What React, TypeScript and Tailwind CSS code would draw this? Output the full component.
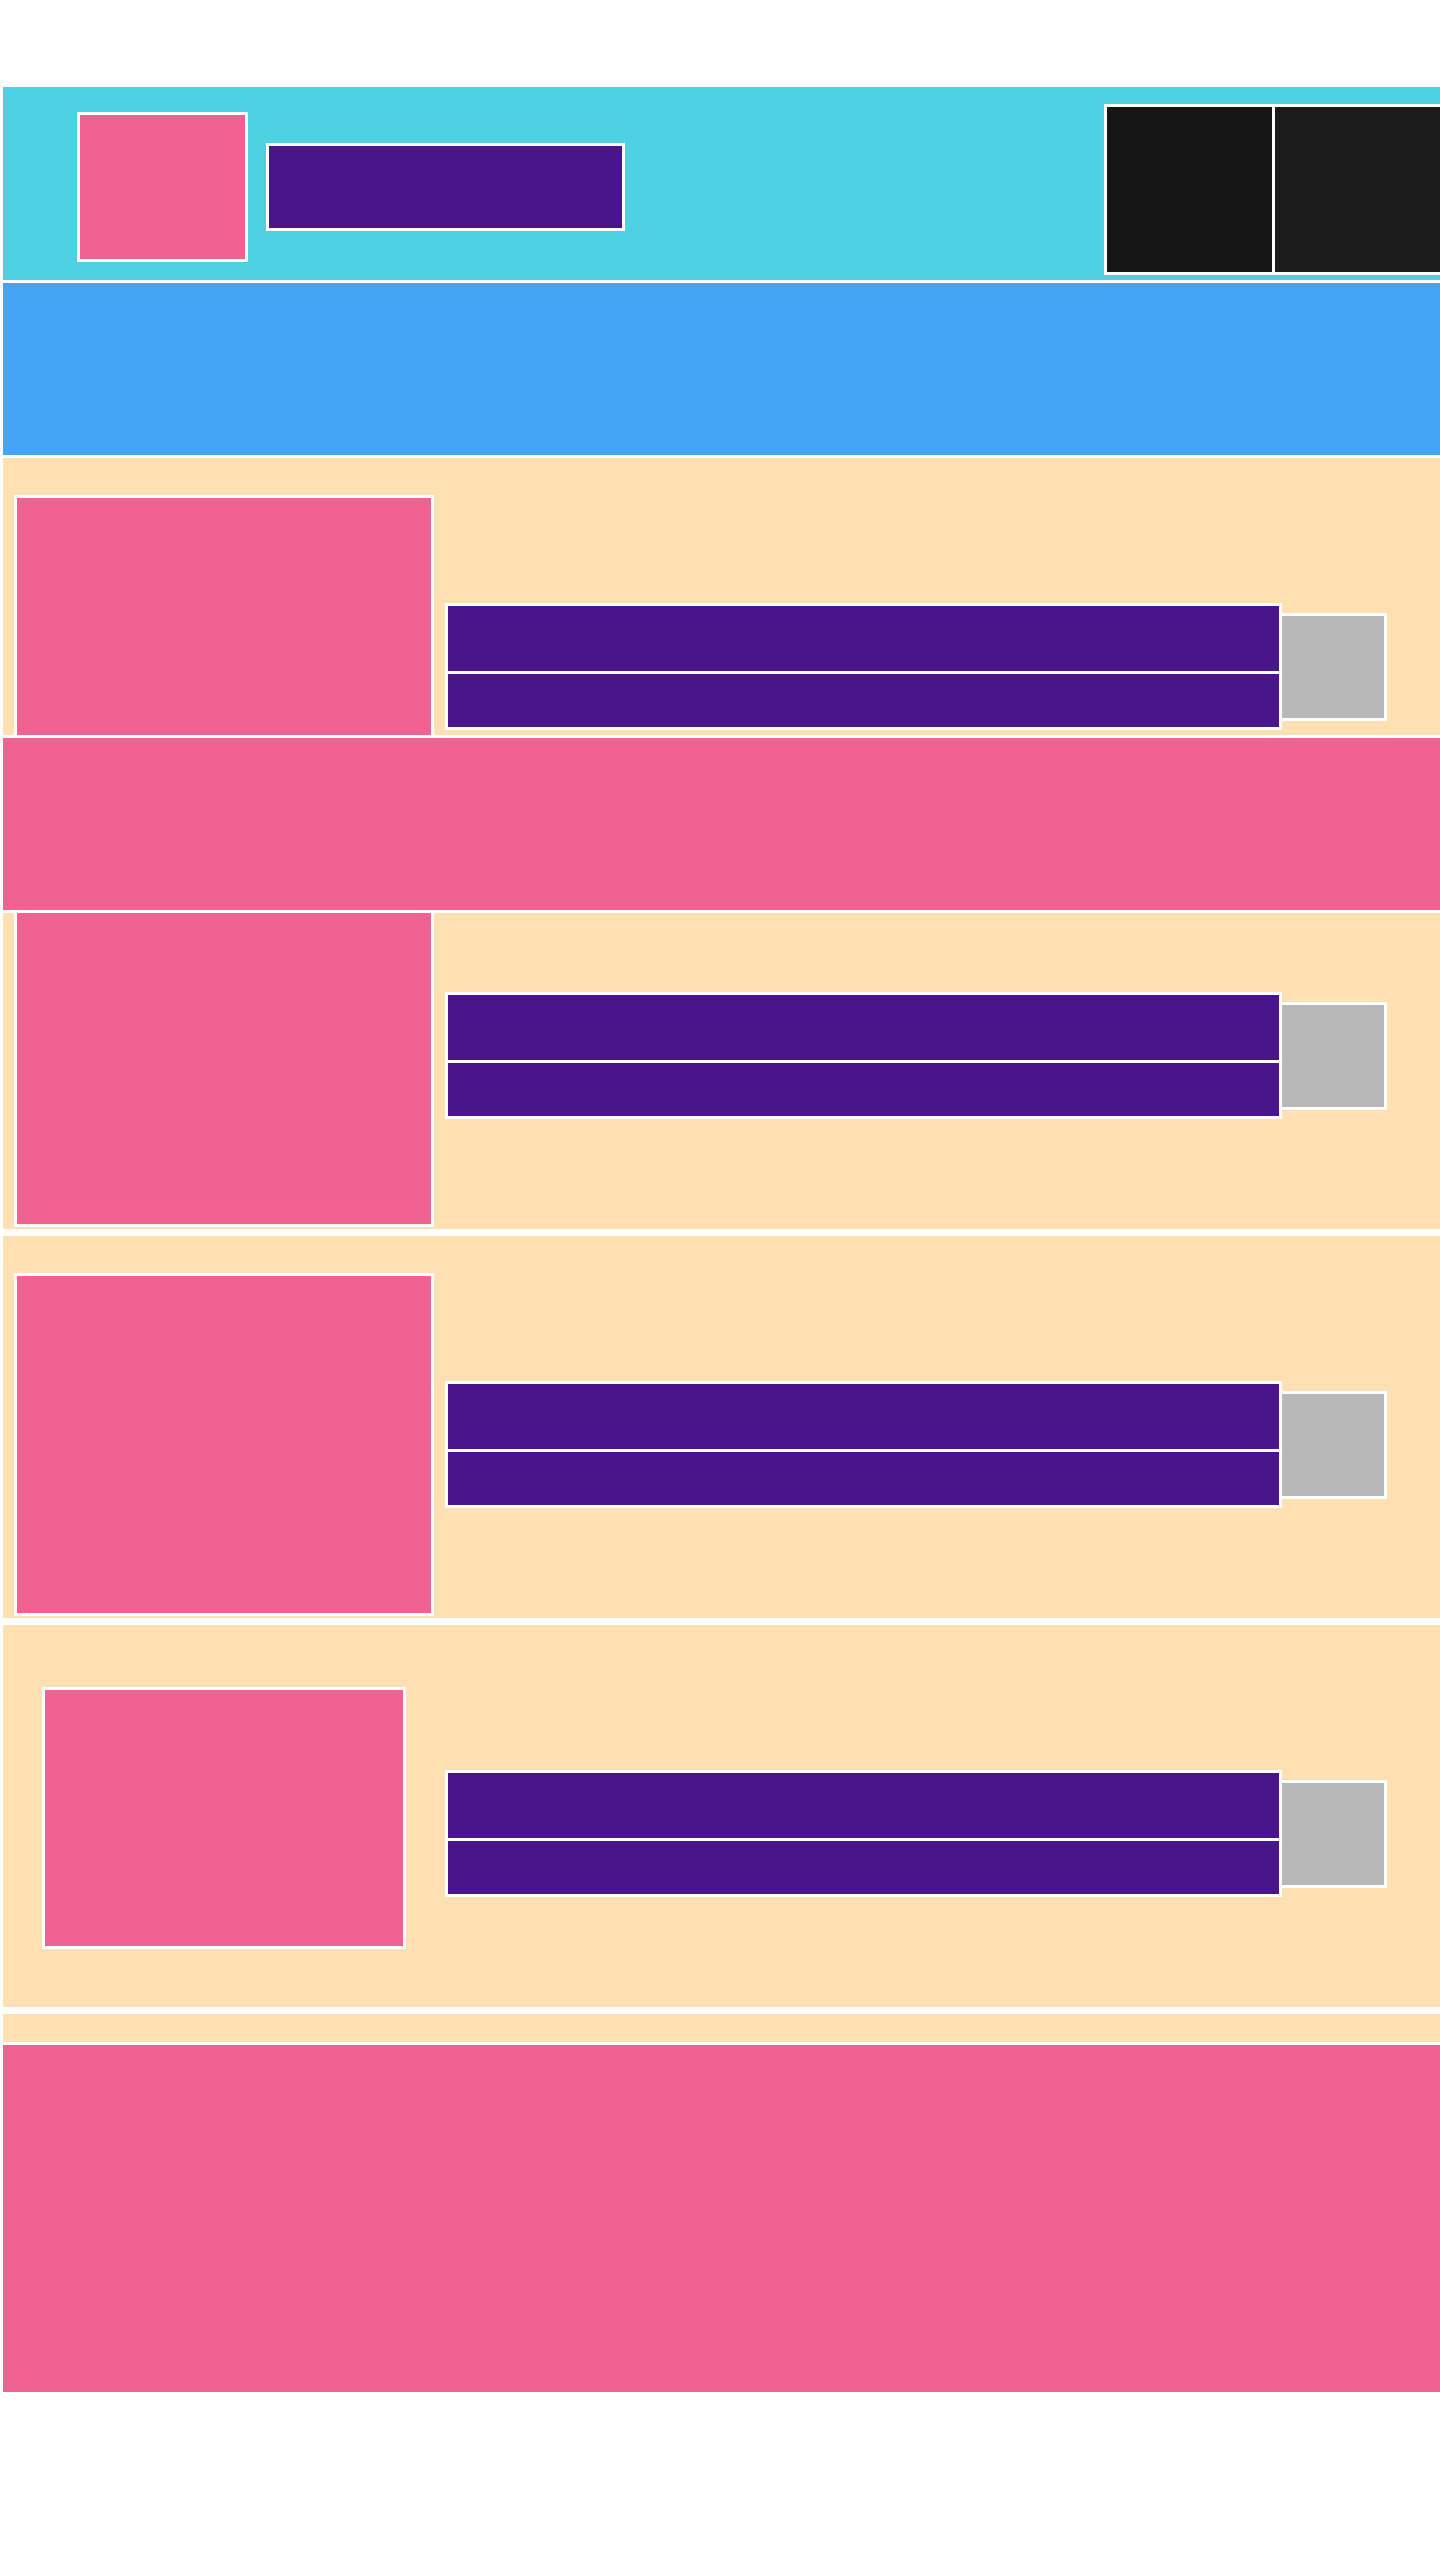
export default function App() {
  const rows = [0, 1, 2, 3];

  return (
    <div className="relative min-h-[2560px] bg-white pl-[3px] pt-[87px] font-['Liberation_Sans',sans-serif]">
      {/* header */}
      <header className="flex h-[193px] overflow-hidden bg-[#4dd0e1]">
        <div className="ml-[74px] mt-[25px] h-[150px] w-[171px] shrink-0 border-[3px] border-white bg-[#f06292]" />
        <div className="ml-[18px] mt-[56px] h-[88px] w-[359px] shrink-0 border-[3px] border-white bg-[#4a148c]" />
        <div className="ml-[479px] mt-[17px] flex shrink-0 gap-[3px] self-start bg-white p-[3px]">
          <div className="h-[165px] w-[165px] bg-[#151515]" />
          <div className="h-[165px] w-[165px] bg-[#1b1b1b]" />
        </div>
      </header>

      <div className="mt-[3px] h-[172px] bg-[#42a5f5]" />

      <div className="mt-[3px] flex flex-col gap-[7px]">
        {rows.map((i) => (
          <section
            key={i}
            className="flex h-[382px] items-start bg-[#ffe0b2] pl-[11px] pt-[37px]"
          >
            <div className="flex h-[343px] w-[420px] shrink-0">
              {i === 3 ? (
                <div className="ml-[28px] mt-[25px] h-[262px] w-[364px] border-[3px] border-white bg-[#f06292]" />
              ) : (
                <div className="h-[343px] w-[420px] border-[3px] border-white bg-[#f06292]" />
              )}
            </div>
            <div className="ml-[11px] flex h-[343px] items-center">
              <div className="flex w-[837px] flex-col gap-[3px] bg-white p-[3px]">
                <div className="h-[65px] bg-[#4a148c]" />
                <div className="h-[53px] bg-[#4a148c]" />
              </div>
              <div className="-ml-[3px] h-[108px] w-[108px] border-[3px] border-white bg-[#b8b8b8]" />
            </div>
          </section>
        ))}
      </div>

      <div className="mt-[7px] h-[28px] bg-[#ffe0b2]" />
      <footer className="mt-[3px] h-[347px] bg-[#f06292]" />

      {/* banner lying over the first two rows */}
      <div className="absolute left-[3px] right-0 top-[735px] h-[178px] border-y-[3px] border-white bg-[#f06292]" />
    </div>
  );
}
